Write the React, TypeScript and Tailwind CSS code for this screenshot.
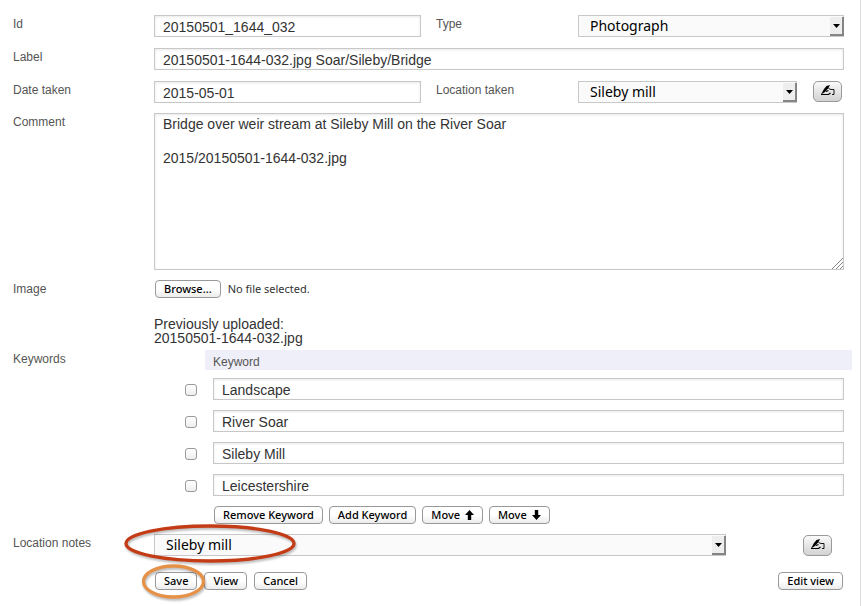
import { useRef, useState } from "react";
import type { ReactNode } from "react";

const textFont = "font-['Liberation_Sans',Arial,sans-serif]";
const uiFont = "font-['Noto_Sans','Open_Sans',sans-serif]";
const fieldLook = `border border-[#c8c8c8] bg-white text-sm text-[#333] shadow-[inset_0_1px_3px_#e8e8e8] outline-none ${textFont}`;
const labelLook = "text-xs leading-[18px] text-[#555]";

function TextField({ id, label, value }: { id: string; label?: string; value: string }) {
  return (
    <input
      id={id}
      aria-label={label}
      type="text"
      defaultValue={value}
      className={`block h-[22px] w-full px-2 pt-px ${fieldLook}`}
    />
  );
}

function SelectField({ id, options }: { id: string; options: string[] }) {
  return (
    <div className="relative min-w-0 grow">
      <select
        id={id}
        className={`block h-[22px] w-full appearance-none border border-[#c8c8c8] bg-[#fafafa] px-[11px] text-sm leading-5 text-black outline-none ${uiFont}`}
      >
        {options.map((o) => (
          <option key={o}>{o}</option>
        ))}
      </select>
      <span className="pointer-events-none absolute top-0.5 right-0 bottom-px flex w-3.5 items-center justify-center border-r-2 border-b-2 border-[#858585] bg-[#eee]">
        <svg width="7" height="4" viewBox="0 0 7 4" aria-hidden="true">
          <path d="M0 0h7L3.500 4z" fill="#000" />
        </svg>
      </span>
    </div>
  );
}

function PushButton({ children, onClick }: { children: ReactNode; onClick?: () => void }) {
  return (
    <button
      type="button"
      onClick={onClick}
      className={`flex h-[18px] items-center justify-center gap-[5px] rounded-[4px] border border-[#999] bg-linear-to-b from-white from-50% to-[#ececec] px-2 text-[11px] leading-4 font-medium whitespace-nowrap text-black ${uiFont}`}
    >
      {children}
    </button>
  );
}

function Arrow({ down = false }: { down?: boolean }) {
  return (
    <svg width="9" height="10" viewBox="0 0 9 10" aria-hidden="true" className={down ? "rotate-180" : ""}>
      <path d="M4.500 0L9 5H6.200V10H2.800V5H0z" fill="#000" />
    </svg>
  );
}

function EditButton({ label }: { label: string }) {
  return (
    <button
      type="button"
      aria-label={label}
      className="flex h-[21px] w-[29px] shrink-0 items-center justify-center rounded-[5px] border border-[#999] bg-linear-to-b from-[#fafafa] to-[#d2d2d2] pb-0.5"
    >
      <svg width="14" height="11" viewBox="0 0 14 11" fill="none" stroke="#000" aria-hidden="true">
        <path d="M9 0L5.500 1L3 4L0 9.500L4 7L7.500 3z" fill="#000" stroke="none" />
        <path d="M7.500 3.500L10 4.500H13V9.500H11" strokeWidth=".9" />
        <path d="M0 9.500H7.500L9.500 8" strokeWidth="1.200" />
        <path d="M5 6.500L7.500 5.500" strokeWidth="1.200" />
      </svg>
    </button>
  );
}

const keywords = ["Landscape", "River Soar", "Sileby Mill", "Leicestershire"];

export default function App() {
  const fileRef = useRef<HTMLInputElement>(null);
  const [fileName, setFileName] = useState("No file selected.");

  return (
    <form className={`min-h-screen border-r border-[#ddd] bg-white pt-[15px] pb-4 pl-[13px] text-[#333] ${textFont}`}>
      <div className="mr-4 grid grid-cols-[141px_282px_142px_1fr] gap-y-[11px]">
        <label htmlFor="id" className={labelLook}>Id</label>
        <div className="pr-[15px]"><TextField id="id" value="20150501_1644_032" /></div>
        <label htmlFor="type" className={labelLook}>Type</label>
        <SelectField id="type" options={["Photograph", "Document"]} />

        <label htmlFor="label" className={labelLook}>Label</label>
        <div className="col-span-3"><TextField id="label" value="20150501-1644-032.jpg Soar/Sileby/Bridge" /></div>

        <label htmlFor="date" className={labelLook}>Date taken</label>
        <div className="pr-[15px]"><TextField id="date" value="2015-05-01" /></div>
        <label htmlFor="location" className={labelLook}>Location taken</label>
        <div className="flex gap-4 pr-0.5">
          <SelectField id="location" options={["Sileby mill"]} />
          <EditButton label="Edit location" />
        </div>
      </div>

      <div className="mt-2.5 mr-4 grid grid-cols-[141px_1fr]">
        <label htmlFor="comment" className={labelLook}>Comment</label>
        <div className="relative">
          <textarea
            id="comment"
            rows={9}
            defaultValue={"Bridge over weir stream at Sileby Mill on the River Soar\n\n2015/20150501-1644-032.jpg"}
            className={`block h-[157px] w-full resize-none px-2 py-0.5 leading-[17px] ${fieldLook}`}
          />
          <svg width="11" height="11" viewBox="0 0 11 11" aria-hidden="true" className="pointer-events-none absolute right-px bottom-px" stroke="#888" fill="none">
            <path d="M0 11L11 0M4 11L11 4M8 11L11 8" />
          </svg>
        </div>
      </div>

      <div className="mt-2.5 mr-4 grid grid-cols-[141px_1fr]">
        <label htmlFor="image" className={labelLook}>Image</label>
        <div className="pl-px">
          <div className="flex items-center gap-[7px]">
            <PushButton onClick={() => fileRef.current?.click()}>Browse...</PushButton>
            <span className={`text-[11px] leading-4 ${uiFont}`}>{fileName}</span>
            <input
              id="image"
              ref={fileRef}
              type="file"
              className="sr-only"
              onChange={(e) => setFileName(e.target.files?.[0]?.name ?? "No file selected.")}
            />
          </div>
        </div>
        <p className="col-start-2 mt-[19px] text-sm leading-[14px]">
          Previously uploaded:
          <br />
          20150501-1644-032.jpg
        </p>
      </div>

      <div className="mt-[5px] mr-2 grid grid-cols-[141px_1fr]">
        <span className={labelLook}>Keywords</span>
        <div>
          <table className="w-full border-collapse">
            <thead>
              <tr>
                <td className="w-[51px] p-0" />
                <th className="h-5 bg-[#efeff9] px-2 pt-1 pb-0 text-left text-xs leading-4 font-normal text-[#555]">Keyword</th>
              </tr>
            </thead>
            <tbody>
              {keywords.map((k, i) => (
                <tr key={k}>
                  <td className="p-0 pt-2 pb-0.5 pl-[31px]">
                    <input
                      type="checkbox"
                      aria-label={`Select ${k}`}
                      className="mt-0.5 block size-3 appearance-none rounded-[3px] border border-[#999] bg-linear-to-b from-white to-[#eee] checked:bg-[#69c]"
                    />
                  </td>
                  <td className="p-0 px-2 pt-2 pb-0.5">
                    <TextField id={`keyword-${i}`} label={`Keyword ${i + 1}`} value={k} />
                  </td>
                </tr>
              ))}
            </tbody>
          </table>
          <div className="mt-2 ml-[60px] flex gap-1.5">
            <PushButton>Remove Keyword</PushButton>
            <PushButton>Add Keyword</PushButton>
            <PushButton>Move <Arrow /></PushButton>
            <PushButton>Move <Arrow down /></PushButton>
          </div>
        </div>
      </div>

      <div className="relative mt-2.5 mr-7 grid grid-cols-[141px_1fr]">
        <label htmlFor="notes" className={labelLook}>Location notes</label>
        <div className="flex items-center gap-[77px]">
          <SelectField id="notes" options={["Sileby mill"]} />
          <EditButton label="Edit location notes" />
        </div>
        <svg width="174" height="46" viewBox="0 0 174 46" fill="none" aria-hidden="true" className="pointer-events-none absolute -top-3 left-[110px] drop-shadow-[1px_2px_1px_#0004]">
          <ellipse cx="87" cy="21.500" rx="84" ry="17.500" stroke="#c43c16" strokeWidth="3.300" />
        </svg>
      </div>

      <div className="relative mt-4 mr-[17px] flex gap-[7px] pl-[142px]">
        <PushButton>Save</PushButton>
        <PushButton>View</PushButton>
        <PushButton>Cancel</PushButton>
        <div className="ml-auto"><PushButton>Edit view</PushButton></div>
        <svg width="66" height="40" viewBox="0 0 66 40" fill="none" aria-hidden="true" className="pointer-events-none absolute -top-2 left-[128px] drop-shadow-[1px_2px_1px_#0004]">
          <ellipse cx="32.500" cy="17.500" rx="30" ry="15.500" stroke="#e59148" strokeWidth="3.300" />
        </svg>
      </div>
    </form>
  );
}
